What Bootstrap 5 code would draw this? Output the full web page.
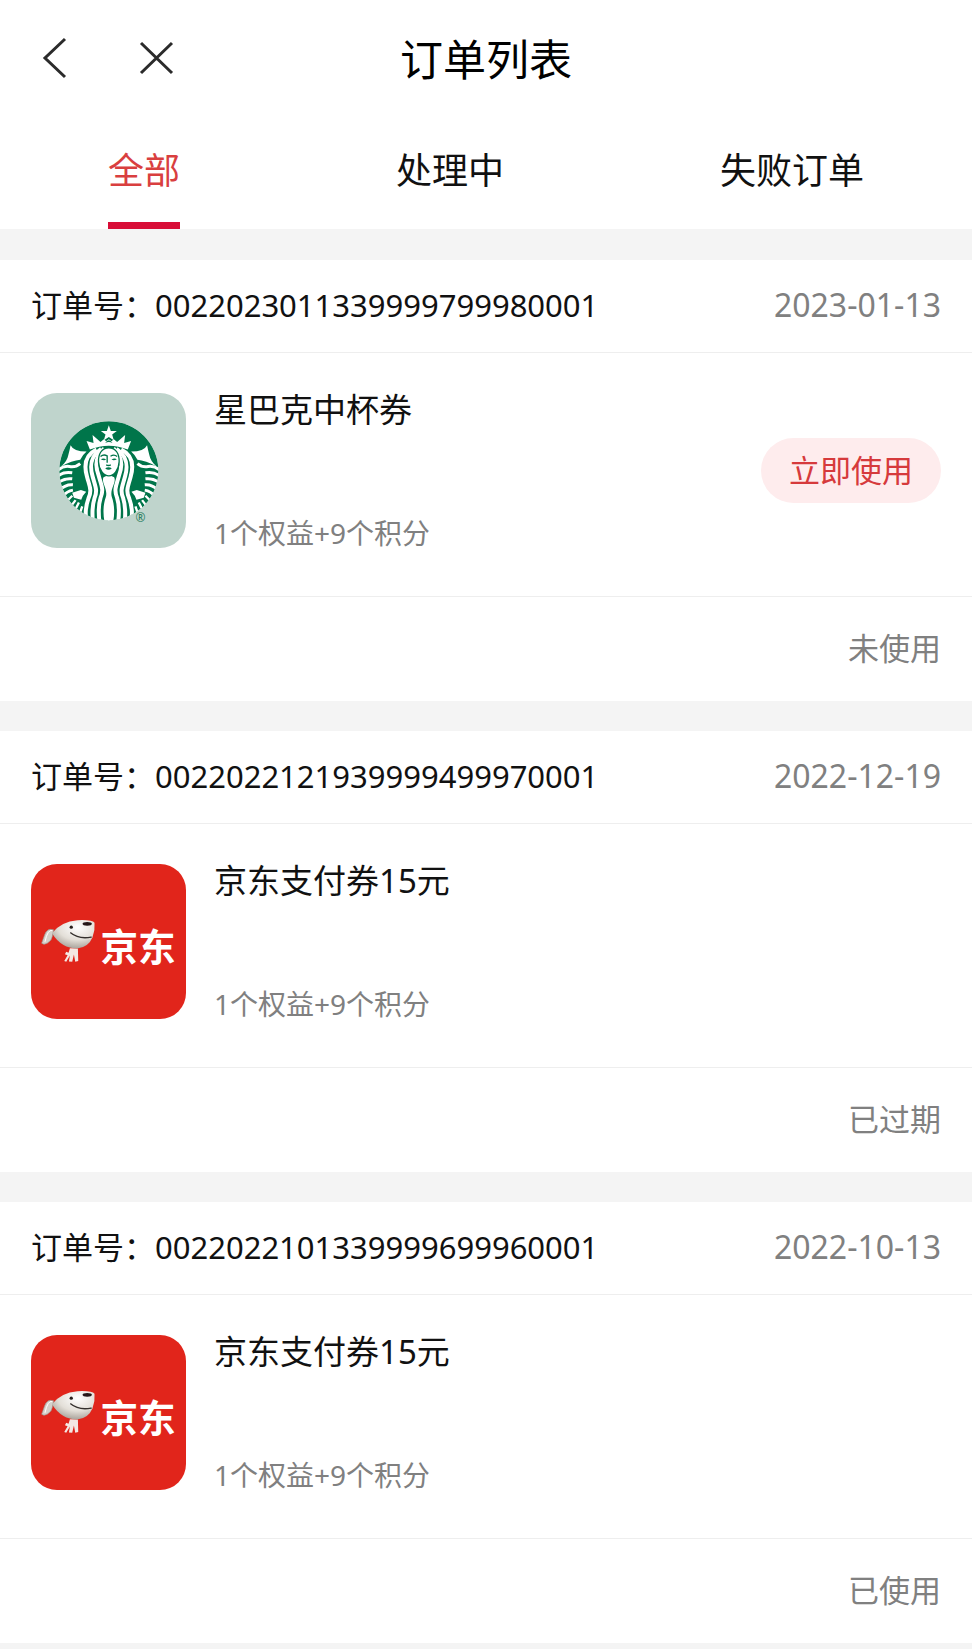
<!DOCTYPE html>
<html lang="zh-CN">
<head>
<meta charset="utf-8">
<meta name="viewport" content="width=device-width, initial-scale=1">
<title>订单列表</title>
<link rel="stylesheet" href="https://cdn.jsdelivr.net/npm/bootstrap@5.3.0/dist/css/bootstrap.min.css">
<style>
  body { background: #f4f4f4; color: #111; font-family: "Noto Sans", "Noto Sans CJK SC", sans-serif; font-size: 31px; line-height: 1; }
  .title-bar { display: grid; grid-template-columns: 1fr auto 1fr; align-items: center; height: 118px; padding: 0 31px; }
  .title-bar h1 { font-size: 43px; line-height: 1; color: #000; }
  .bar-btn { width: 46px; height: 46px; color: #2b2b2b; }
  .bar-btn svg, .thumb svg { display: block; width: 100%; height: 100%; }
  .tab-link { display: block; height: 111px; padding-top: 35px; font-size: 36px; line-height: 1; color: #111; text-decoration: none; border-bottom: 7px solid transparent; }
  .tab-link.active { color: #d93f3f; border-color: #d80d37; }
  .orders { display: grid; gap: 30px; padding-top: 31px; }
  .line { border-bottom: 1px solid #eee; }
  .order-head { padding: 0 31px 2px; height: 93px; }
  .order-head time { font-size: 32px; }
  .order-body { padding: 40px 31px 48px; gap: 28px; }
  .order-foot { padding: 0 31px 2px; height: 104px; }
  .thumb { width: 155px; height: 155px; border-radius: 26px; overflow: hidden; }
  .order-name { font-size: 33px; line-height: 1; font-weight: 400; }
  .order-cost { font-size: 28px; padding-bottom: 1px; }
  .dim { color: #808080; }
  .use-btn { height: 65px; padding: 0 28px; border: 0; font-size: 31px; line-height: 1; color: #d63a3c; background: #feeced; }
</style>
</head>
<body>
<svg width="0" height="0" class="position-absolute" aria-hidden="true">
  <defs>
    <radialGradient id="dogHead" cx=".6" cy=".25" r=".75"><stop offset="0" stop-color="#fff"/><stop offset=".6" stop-color="#e3dfd8"/><stop offset="1" stop-color="#aaa49c"/></radialGradient>
    <clipPath id="disc"><circle cx="268" cy="271" r="149"/></clipPath>
    <g id="sirenHalf">
      <path fill="#fff" d="M153 194Q162 213 201 213Q190 222 182 238Q158 240 124 258Q143 242 146 224Q150 210 153 194Z"/>
      <g fill="none" stroke="#fff" stroke-width="9">
        <path d="M116 268Q132 255 150 258T182 249"/>
        <path d="M116 286Q132 273 158 277"/>
        <path d="M116 306Q135 292 158 295"/>
        <path d="M122 328Q138 311 160 313"/>
        <path d="M130 347Q142 332 160 329"/>
        <path stroke-width="7" d="M140 364L158 346M152 380L168 359M165 392L178 366M179 404L188 378"/>
      </g>
      <path fill="#fff" d="M158 337L184 329L200 334L190 346L185 358L163 352Z"/>
      <g fill="none" stroke="#fff" stroke-width="12">
        <path d="M231 207C192 226 195 262 202 287C210 319 218 328 207 353C198 378 197 398 200 416"/>
        <path d="M245 205C208 230 212 262 219 287C227 318 235 328 225 353C217 378 218 402 220 424"/>
        <path d="M254 204C223 230 229 264 238 287C245 314 254 326 243 353C235 378 237 402 240 426"/>
      </g>
      <path fill="#fff" d="M270 282L252 290C244 307 266 325 259 350C251 372 250 400 255 424H270Z"/>
    </g>
    <symbol id="jd" viewBox="34 42 466 466">
      <path fill="#e1251b" d="M34 42h466v466H34z"/>
      <path fill="#d5d0ca" stroke="#98918b" stroke-width="2" d="M102 240Q83 233 75 255L66 280Q72 287 83 280Q96 273 98 260Z"/>
      <path fill="none" stroke="#fff" stroke-width="3" d="M98 242Q84 238 76 276"/>
      <path fill="#f4e8e3" d="M151 295L175 296L176 334L167 336L163 314L158 336L148 335L151 317L140 336L134 334L144 316L136 313L140 306L147 309Z"/>
      <path fill="url(#dogHead)" d="M97 250Q124 215 174 211Q218 209 225 219Q227 241 219 262Q207 292 173 296Q126 296 97 250Z"/>
      <ellipse cx="203" cy="222" rx="14" ry="6" fill="#251719"/>
      <circle cx="155" cy="232" r="5" fill="#29201e"/>
      <path fill="none" stroke="#34302d" stroke-width="4" stroke-linecap="round" d="M153 249Q177 269 215 262"/>
      <text x="243" y="334" font-size="113" font-weight="700" font-family="Noto Sans CJK SC, sans-serif" fill="#fff">京东</text>
    </symbol>
  </defs>
</svg>

<header class="bg-white">
  <div class="title-bar">
    <div class="d-flex">
      <button type="button" class="bar-btn btn p-0 border-0 me-5" aria-label="返回">
        <svg viewBox="31 36 46 46" fill="none" stroke="currentColor" stroke-width="3"><path d="M65 39L45 58L65 77"/></svg>
      </button>
      <button type="button" class="bar-btn btn p-0 border-0" aria-label="关闭">
        <svg viewBox="125 36 46 46" overflow="visible" fill="none" stroke="currentColor" stroke-width="3"><path d="M141 43L172 73M172 43L141 73"/></svg>
      </button>
    </div>
    <h1 class="m-0 fw-normal">订单列表</h1>
  </div>
  <nav>
    <ul class="list-unstyled d-flex justify-content-around m-0">
      <li><a class="tab-link active" href="#all" aria-current="page">全部</a></li>
      <li><a class="tab-link" href="#processing">处理中</a></li>
      <li><a class="tab-link" href="#failed">失败订单</a></li>
    </ul>
  </nav>
</header>

<main class="orders">
  <article class="bg-white">
    <div class="order-head line d-flex align-items-center justify-content-between">
      <span>订单号：0022023011339999799980001</span><time class="dim" datetime="2023-01-13">2023-01-13</time>
    </div>
    <div class="order-body line d-flex">
      <div class="thumb flex-shrink-0">
        <svg viewBox="34 37 466 466" role="img" aria-label="星巴克">
          <path fill="#bfd4cc" d="M34 37h466v466H34z"/>
          <g clip-path="url(#disc)">
            <circle cx="268" cy="271" r="149" fill="#00754a"/>
            <use href="#sirenHalf"/>
            <use href="#sirenHalf" transform="matrix(-1 0 0 1 536 0)"/>
            <path fill="#fff" stroke="#00754a" stroke-width="4" d="M268 202C246 202 236 221 237 244C238 268 253 286 268 286S298 268 299 244C300 221 290 202 268 202Z"/>
            <path fill="none" stroke="#00754a" stroke-width="4" d="M243 228Q252 220 263 226L263 247M273 227Q284 220 293 228M260 253Q267 257 274 253"/>
            <path fill="#00754a" d="M244 236Q253 231 260 238Q251 241 244 236ZM276 238Q284 231 292 236Q285 241 276 238ZM257 263Q267 258 277 263Q267 272 257 263Z"/>
            <path fill="#fff" d="M211 207L201 181L222 187L219 163L243 184L253 176L260 182L268 176L276 182L283 176L293 184L317 163L314 187L335 181L325 207Q268 184 211 207Z"/>
            <path fill="#00754a" d="M257 187Q268 171 279 187Q268 182 257 187Z"/>
            <path fill="#fff" d="M268 134L274 151L292 151L278 162L283 179L268 169L253 179L258 162L244 151L262 151Z"/>
          </g>
          <text x="348" y="426" font-size="36" font-family="Noto Sans, sans-serif" fill="#2d8060">®</text>
        </svg>
      </div>
      <div class="d-flex flex-column justify-content-between flex-grow-1">
        <h2 class="order-name m-0">星巴克中杯券</h2>
        <div class="order-cost dim">1个权益+9个积分</div>
      </div>
      <button type="button" class="use-btn btn rounded-pill align-self-center">立即使用</button>
    </div>
    <div class="order-foot dim d-flex align-items-center justify-content-end">未使用</div>
  </article>

  <article class="bg-white">
    <div class="order-head line d-flex align-items-center justify-content-between">
      <span>订单号：0022022121939999499970001</span><time class="dim" datetime="2022-12-19">2022-12-19</time>
    </div>
    <div class="order-body line d-flex">
      <div class="thumb flex-shrink-0"><svg role="img" aria-label="京东"><use href="#jd"/></svg></div>
      <div class="d-flex flex-column justify-content-between flex-grow-1">
        <h2 class="order-name m-0">京东支付券15元</h2>
        <div class="order-cost dim">1个权益+9个积分</div>
      </div>
    </div>
    <div class="order-foot dim d-flex align-items-center justify-content-end">已过期</div>
  </article>

  <article class="bg-white">
    <div class="order-head line d-flex align-items-center justify-content-between">
      <span>订单号：0022022101339999699960001</span><time class="dim" datetime="2022-10-13">2022-10-13</time>
    </div>
    <div class="order-body line d-flex">
      <div class="thumb flex-shrink-0"><svg role="img" aria-label="京东"><use href="#jd"/></svg></div>
      <div class="d-flex flex-column justify-content-between flex-grow-1">
        <h2 class="order-name m-0">京东支付券15元</h2>
        <div class="order-cost dim">1个权益+9个积分</div>
      </div>
    </div>
    <div class="order-foot dim d-flex align-items-center justify-content-end">已使用</div>
  </article>
</main>
<script src="https://cdn.jsdelivr.net/npm/bootstrap@5.3.0/dist/js/bootstrap.bundle.min.js"></script>
</body>
</html>
